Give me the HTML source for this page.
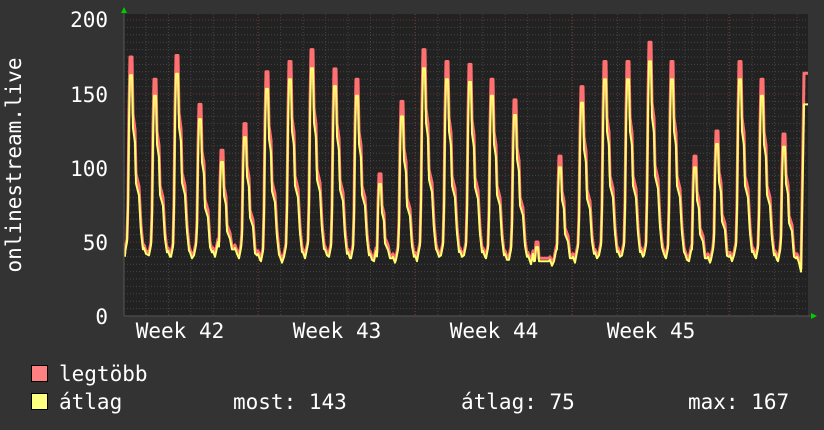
<!DOCTYPE html>
<html><head><meta charset="utf-8"><style>
body{margin:0;background:#333;width:824px;height:430px;overflow:hidden}
svg{display:block}
text{font-family:"DejaVu Sans Mono","Liberation Mono",monospace;font-size:21px;fill:#fff}
</style></head><body>
<svg id="s" width="824" height="430" xmlns="http://www.w3.org/2000/svg">
<rect width="824" height="430" fill="#333"/>
<rect x="124" y="14" width="684" height="302" fill="#222"/>
<g id="grid"></g>
<path id="red" fill="none" stroke="#ff7070" stroke-width="3" stroke-linejoin="round"/>
<path id="yel" fill="none" stroke="#ffff70" stroke-width="2" stroke-linejoin="round"/>
<line x1="124" y1="316" x2="812" y2="316" stroke="#555" stroke-width="1"/>
<line x1="124" y1="12" x2="124" y2="316" stroke="#555" stroke-width="1"/>
<polygon points="121,13 127,13 124,7" fill="#0c0"/>
<polygon points="811,313 811,319 817,316" fill="#0c0"/>
<g text-anchor="end">
<text x="108" y="27">200</text>
<text x="108" y="102">150</text>
<text x="108" y="176">100</text>
<text x="108" y="250">50</text>
<text x="108" y="324">0</text>
</g>
<text transform="translate(21,165) rotate(-90)" text-anchor="middle">onlinestream.live</text>
<g text-anchor="middle">
<text x="180" y="338">Week 42</text>
<text x="337" y="338">Week 43</text>
<text x="494" y="338">Week 44</text>
<text x="651" y="338">Week 45</text>
</g>
<rect x="31.5" y="365.5" width="16" height="16" fill="#ff8080" stroke="#000"/>
<rect x="31.5" y="393.5" width="16" height="16" fill="#ffff80" stroke="#000"/>
<text x="59" y="381">legtöbb</text>
<text x="59" y="409">átlag</text>
<text x="233" y="409">most: 143</text>
<text x="461" y="409">átlag: 75</text>
<text x="688" y="409">max: 167</text>
</svg>
<script>
var g=document.getElementById('grid'),h='';
for(var v=5;v<200;v+=5){if(v%50)h+='<line x1="124" x2="808" y1="'+(316-v*1.48)+'" y2="'+(316-v*1.48)+'" stroke="#444" stroke-dasharray="1,2"/>';}
for(var x=146;x<808;x+=22.45){h+='<line y1="14" y2="316" x1="'+x+'" x2="'+x+'" stroke="#444" stroke-dasharray="1,2"/>';}
for(var v=50;v<=200;v+=50)h+='<line x1="124" x2="808" y1="'+(316-v*1.48)+'" y2="'+(316-v*1.48)+'" stroke="#703030" stroke-dasharray="1,2"/>';
[258,415,572,729].forEach(function(x){h+='<line y1="14" y2="316" x1="'+x+'" x2="'+x+'" stroke="#703030" stroke-dasharray="1,2"/>';});
g.innerHTML=h;
var pk=[[131,175],[155,160],[177,176],[200,143],[222,112],[245,130],[267,165],[290,172],[312,180],[335,167],[357,160],[380,96],[402,145],[424,180],[447,172],[470,170],[492,160],[515,146],[537,50],[560,108],[582,155],[605,172],[628,172],[650,185],[672,172],[695,108],[717,125],[740,172],[762,160],[784,123]];
var tr=[42,40,39,40,42,38,36,39,41,39,38,36,37,40,40,40,38,37,34,36,39,40,40,40,38,36,37,40,38,36];
function Y(v){return 316-v*1.48}
function build(f,o){var d='M125,'+Y(40+o);
pk.forEach(function(p,i){var x=p[0],v=p[1]*f,t=tr[i]+o;
function m(a){return Y(Math.max(t+3,a));}
d+=' L'+(x-6)+','+Y(t+1)+' L'+(x-4)+','+m(t+8)+' L'+(x-3)+','+m(v*0.45)+' L'+(x-2)+','+m(v*0.8)+' L'+(x-1)+','+Y(v)+' L'+(x+1)+','+Y(v)+' L'+(x+2)+','+m(v*0.78)+' L'+(x+4)+','+m(v*0.72)+' L'+(x+5)+','+m(v*0.55)+' L'+(x+8)+','+m(v*0.5)+' L'+(x+10)+','+m(v*0.35)+' L'+(x+12)+','+m(v*0.27)+' L'+(x+13)+','+Y(t+4)+' L'+(x+15)+','+Y(t);});
d+=' L801,'+Y(30+o)+' L804,'+Y(f>0.95?164:143)+' L808,'+Y(f>0.95?164:143);return d;}
document.getElementById('red').setAttribute('d',build(1,2));
document.getElementById('yel').setAttribute('d',build(0.93,0));
</script>
</body></html>
